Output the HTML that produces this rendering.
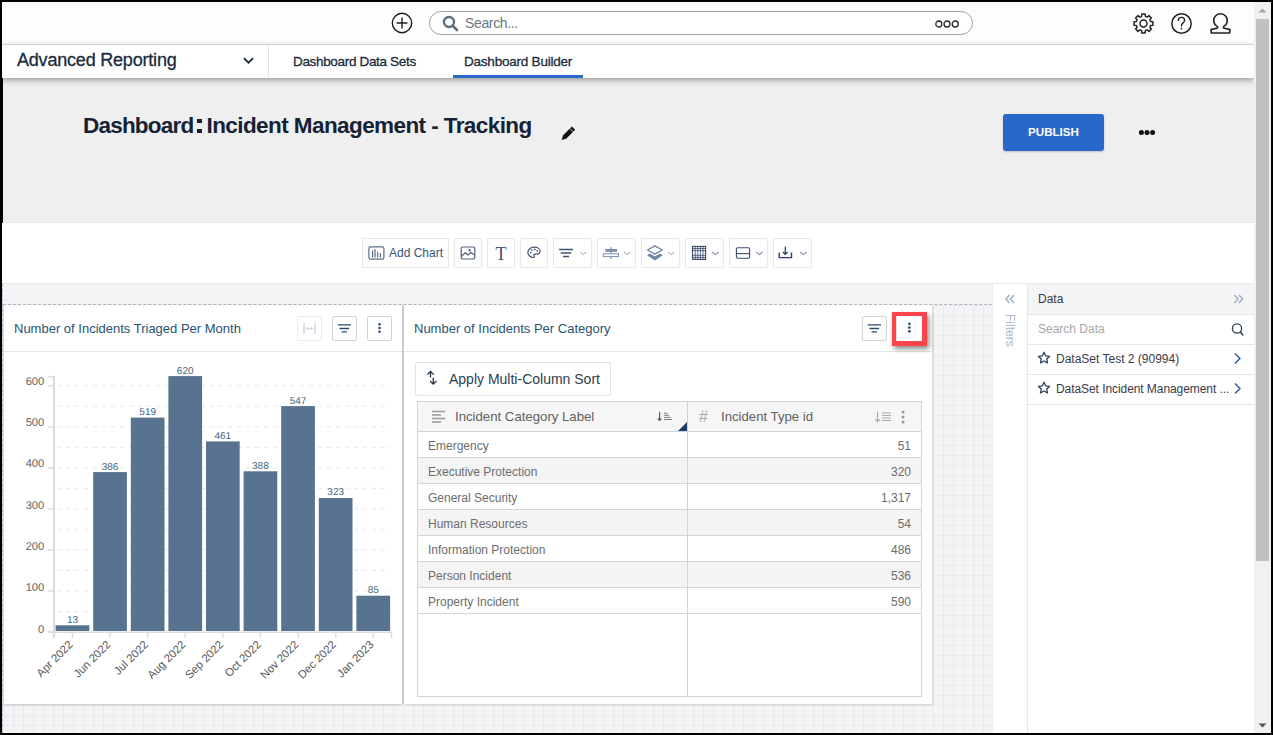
<!DOCTYPE html>
<html><head><meta charset="utf-8">
<style>
*{box-sizing:border-box;margin:0;padding:0}
html,body{width:1273px;height:735px;overflow:hidden;background:#000;font-family:"Liberation Sans",sans-serif}
.abs{position:absolute}
#app{position:absolute;left:2px;top:2px;width:1269px;height:730px;background:#fff;overflow:hidden}
.tb{top:238px;height:30px;border:1px solid #e8e8e8;border-radius:1px;background:#fff}
.cb{top:316px;width:25px;height:25px;border:1px solid #d4d4d4;border-radius:2px;background:#fff}
.t{position:absolute;white-space:nowrap;line-height:1}
</style></head>
<body>
<div class="abs" style="left:0;top:0;width:1273px;height:735px">

<!-- ===== top bar ===== -->
<div class="abs" style="left:2px;top:2px;width:1252px;height:42px;background:#fdfdfd"></div>
<div class="abs" style="left:2px;top:44px;width:1252px;height:1px;background:#dde2e6"></div>

<!-- plus circle -->
<svg class="abs" style="left:390px;top:11px" width="24" height="24" viewBox="0 0 24 24">
 <circle cx="12" cy="12" r="9.7" fill="none" stroke="#1e1e1e" stroke-width="1.4"/>
 <path d="M12 6.6V17.4M6.6 12H17.4" stroke="#1e1e1e" stroke-width="1.4"/>
</svg>
<!-- search box -->
<div class="abs" style="left:429px;top:11px;width:544px;height:24px;border:1px solid #9aa5ae;border-radius:12px;background:#fff"></div>
<svg class="abs" style="left:442px;top:14.5px" width="17" height="17" viewBox="0 0 17 17">
 <circle cx="7" cy="7" r="5" fill="none" stroke="#5c6f7c" stroke-width="2.4"/>
 <path d="M10.6 10.6L15 15" stroke="#5c6f7c" stroke-width="2.6" stroke-linecap="round"/>
</svg>
<div class="t" style="left:465px;top:15.9px;font-size:14px;letter-spacing:-0.35px;color:#6a7884">Search...</div>
<svg class="abs" style="left:934px;top:19px" width="26" height="10" viewBox="0 0 26 10">
 <circle cx="4.8" cy="5" r="3" fill="none" stroke="#222" stroke-width="1.3"/>
 <circle cx="13" cy="5" r="3" fill="none" stroke="#222" stroke-width="1.3"/>
 <circle cx="21.2" cy="5" r="3" fill="none" stroke="#222" stroke-width="1.3"/>
</svg>
<!-- gear -->
<svg class="abs" style="left:1131.1px;top:10.9px" width="25" height="25" viewBox="0 0 25 25">
 <path fill="none" stroke="#222" stroke-width="1.5" stroke-linejoin="round" d="M10.58 5.35 L10.83 3.05 L14.17 3.05 L14.42 5.35 L16.20 6.09 L18.01 4.64 L20.36 6.99 L18.91 8.80 L19.65 10.58 L21.95 10.83 L21.95 14.17 L19.65 14.42 L18.91 16.20 L20.36 18.01 L18.01 20.36 L16.20 18.91 L14.42 19.65 L14.17 21.95 L10.83 21.95 L10.58 19.65 L8.80 18.91 L6.99 20.36 L4.64 18.01 L6.09 16.20 L5.35 14.42 L3.05 14.17 L3.05 10.83 L5.35 10.58 L6.09 8.80 L4.64 6.99 L6.99 4.64 L8.80 6.09Z"/>
 <circle cx="12.5" cy="12.5" r="3.5" fill="none" stroke="#222" stroke-width="1.5"/>
</svg>
<!-- help -->
<svg class="abs" style="left:1169px;top:10.9px" width="25" height="25" viewBox="0 0 25 25">
 <circle cx="12.5" cy="12.5" r="9.7" fill="none" stroke="#222" stroke-width="1.5"/>
 <path d="M9.3 9.4c0-1.8 1.4-3 3.2-3s3.1 1.2 3.1 2.8c0 1.5-.9 2.2-1.8 2.9-.8.6-1.3 1.2-1.4 2.9" fill="none" stroke="#222" stroke-width="1.4" stroke-linecap="round"/>
 <circle cx="12.4" cy="17.6" r="0.95" fill="#222"/>
</svg>
<!-- user -->
<svg class="abs" style="left:1205px;top:8px" width="30" height="30" viewBox="0 0 30 30">
 <path fill="none" stroke="#222" stroke-width="1.6" stroke-linejoin="round" d="M12.5 18.6A6.8 6.8 0 1 1 18.5 18.6V20L25 21.6L24.7 25H6.3L6 21.6L12.5 20Z"/>
</svg>

<!-- ===== nav bar ===== -->
<div class="abs" style="left:3px;top:78px;width:1251px;height:145px;background:#efefef;border-bottom:1px solid #eaeaea"></div>

<div class="abs" style="left:2px;top:45px;width:1252px;height:33px;background:#fff;box-shadow:0 2px 6px rgba(0,0,0,.38)"></div>
<div class="t" style="left:17px;top:50.6px;font-size:18px;letter-spacing:-0.2px;color:#1b2b3b;-webkit-text-stroke:0.3px #1b2b3b">Advanced Reporting</div>
<svg class="abs" style="left:242px;top:56px" width="13" height="9" viewBox="0 0 13 9">
 <path d="M2 2.2L6.5 6.7 11 2.2" fill="none" stroke="#1b2b3b" stroke-width="1.8"/>
</svg>
<div class="abs" style="left:268px;top:45px;width:1px;height:32px;background:#dfe3e7"></div>
<div class="t" style="left:293px;top:54.5px;font-size:13.5px;letter-spacing:-0.33px;color:#1b2b3b;-webkit-text-stroke:0.3px #1b2b3b">Dashboard Data Sets</div>
<div class="t" style="left:464px;top:54.5px;font-size:13.5px;letter-spacing:-0.22px;color:#1b2b3b;-webkit-text-stroke:0.3px #1b2b3b">Dashboard Builder</div>
<div class="abs" style="left:453px;top:75px;width:130px;height:3px;background:#2a6ac9"></div>

<!-- ===== gray header area ===== -->
<div class="t" style="left:83px;top:115px;font-size:22.5px;font-weight:bold;letter-spacing:-0.8px;color:#152236">Dashboard</div>
<div class="abs" style="left:197px;top:119px;width:5px;height:4px;background:#152236"></div>
<div class="abs" style="left:197px;top:129px;width:5px;height:4px;background:#152236"></div>
<div class="t" style="left:206.5px;top:115px;font-size:22.5px;font-weight:bold;letter-spacing:-0.58px;color:#152236">Incident Management - Tracking</div>
<svg class="abs" style="left:552px;top:120px" width="30" height="26" viewBox="552 120 30 26">
 <path d="M561.6 140.1L562.97 135.47 571.87 126.57 575.13 129.83 566.23 138.73Z" fill="#111"/>
 <path d="M569.9 128.5l3.3 3.3" stroke="#efefef" stroke-width=".9"/>
</svg>
<div class="abs" style="left:1003px;top:114px;width:101px;height:37px;background:#2968c8;border-radius:3px;box-shadow:0 1px 2px rgba(0,0,0,.2)"></div>
<div class="t" style="left:1003px;top:126.3px;width:101px;text-align:center;font-size:11.6px;font-weight:bold;color:#fff">PUBLISH</div>
<svg class="abs" style="left:1138px;top:128px" width="18" height="8" viewBox="0 0 18 8">
 <circle cx="3.4" cy="4.4" r="2.5" fill="#111"/><circle cx="9" cy="4.4" r="2.5" fill="#111"/><circle cx="14.6" cy="4.4" r="2.5" fill="#111"/>
</svg>

<!-- ===== toolbar ===== -->
<div class="abs" style="left:2px;top:223px;width:1252px;height:60px;background:#fff"></div>

<!-- toolbar buttons -->
<div class="abs tb" style="left:362px;width:87px"></div>
<div class="abs tb" style="left:454px;width:28px"></div>
<div class="abs tb" style="left:487px;width:28px"></div>
<div class="abs tb" style="left:520px;width:28px"></div>
<div class="abs tb" style="left:553px;width:39px"></div>
<div class="abs tb" style="left:597px;width:39px"></div>
<div class="abs tb" style="left:641px;width:39px"></div>
<div class="abs tb" style="left:685px;width:39px"></div>
<div class="abs tb" style="left:729px;width:39px"></div>
<div class="abs tb" style="left:773px;width:39px"></div>
<div class="t" style="left:389px;top:246.8px;font-size:12px;color:#38557a">Add Chart</div>
<div class="t" style="left:491px;top:244.5px;width:20px;text-align:center;font-family:'Liberation Serif',serif;font-size:18px;color:#3f5470">T</div>
<svg class="abs" style="left:355px;top:236px" width="460" height="34" viewBox="355 236 460 34">
 <g fill="none" stroke-width="1.2">
  <rect x="368.9" y="246.8" width="15" height="12.4" rx="1.6" stroke="#5e6e84"/>
  <path d="M372.6 257.5v-7M375 257.5v-8.6M377.7 257.5v-5.6M380.4 257.5v-4.3" stroke="#4b5f7a" stroke-width="1.1"/>
  <rect x="461.2" y="247" width="13.6" height="12" rx="1.4" stroke="#4e6178"/>
  <path d="M461.6 256.2l3.6-3.4 2.8 2.2 3-2.7 3.4 2.8" stroke="#4e6178"/>
 </g>
 <circle cx="469.6" cy="250.2" r="1.1" fill="#3f5470"/>
 <path d="M534 247.2c-3.4 0-6.1 2.3-6.1 5.2 0 2.9 2.5 5.1 5.5 5.1.7 0 1-.4 1-.9 0-.6-.6-.9-.6-1.5 0-.6.5-.9 1.1-.9h1.4c2.2 0 3.8-1.3 3.8-3.1 0-2.3-2.7-3.9-6.1-3.9z" fill="none" stroke="#3f5470" stroke-width="1.2"/>
 <circle cx="530.8" cy="252.6" r=".85" fill="#3f5470"/><circle cx="531.9" cy="250" r=".85" fill="#3f5470"/><circle cx="534.8" cy="249.4" r=".85" fill="#3f5470"/><circle cx="537.2" cy="250.8" r=".85" fill="#3f5470"/>
 <path d="M559 249.6h14M560.7 253.1h10.6M563 256.6h6" stroke="#3f5470" stroke-width="1.5"/>
 <!-- align -->
 <path d="M610.9 247.2v11.6" stroke="#7d90ab" stroke-width="1.3"/>
 <rect x="605.4" y="249" width="11.6" height="2.9" fill="#7d90ab"/>
 <rect x="603.3" y="253.8" width="15.2" height="2.8" fill="#fff" stroke="#7d90ab" stroke-width="1"/>
 <!-- layers -->
 <path d="M654.9 245.8l7.3 4.2-7.3 4.2-7.3-4.2z" fill="none" stroke="#6f86a6" stroke-width="1.4" stroke-linejoin="round"/>
 <path d="M647 255.3l7.9 5.2 7.9-5.2-2.9-1.9-5 3.2-5-3.2z" fill="#6f86a6"/>
 <!-- grid -->
 <rect x="692.5" y="246.4" width="13.1" height="13" fill="none" stroke="#36476a" stroke-width="1.1"/>
 <path d="M695.2 246.5v13M697.8 246.5v13M700.4 246.5v13M703 246.5v13M692.5 248.5h13M692.5 250.6h13M692.5 255.3h13M692.5 257.4h13" stroke="#36476a" stroke-width=".8"/>
 <!-- border -->
 <rect x="736.4" y="247.7" width="13.2" height="10.6" rx="1.2" fill="none" stroke="#3a4d6e" stroke-width="1.1"/>
 <path d="M736.6 253.6h13" stroke="#3a4d6e" stroke-width="1.1"/>
 <!-- download -->
 <path d="M779.2 252.4v5.2h12.3v-5.2" fill="none" stroke="#2f416a" stroke-width="1.4"/>
 <path d="M785.3 246.7v7.6M782.9 252l2.4 2.4 2.4-2.4" fill="none" stroke="#2f416a" stroke-width="1.3"/>
 <!-- chevrons -->
 <path d="M580.2 252l2.9 2.7 2.9-2.7M624 252l3.2 2.6 3.2-2.6M668 252l3.2 2.6 3.2-2.6" fill="none" stroke="#8ba3c6" stroke-width="1"/>
 <path d="M712.2 252l3.2 2.6 3.2-2.6M756.2 252l3.2 2.6 3.2-2.6M800.2 252l3.2 2.6 3.2-2.6" fill="none" stroke="#5a5a9a" stroke-width="1"/>
</svg>

<!-- ===== canvas ===== -->
<div class="abs" style="left:2px;top:283px;width:991px;height:450px;background:#f4f4f6"></div>
<div class="abs" style="left:2px;top:283px;width:1252px;height:1px;background:#ececec"></div>
<svg class="abs" style="left:0;top:280px" width="995" height="30" viewBox="0 280 995 30"><path d="M3.1 304.5H992.5" stroke="#aab6c3" stroke-width="1" stroke-dasharray="3 2.006"/></svg>
<svg class="abs" style="left:0;top:283px" width="4" height="450" viewBox="0 283 4 450"><path d="M2.5 283V733" stroke="#b4c0cc" stroke-width="1" stroke-dasharray="3.7 1.3" stroke-dashoffset="-0.3"/></svg>
<div class="abs" style="left:3px;top:305px;width:990px;height:428px;background-image:linear-gradient(90deg,#eaeaec 1px,transparent 1px),linear-gradient(180deg,#eaeaec 1px,transparent 1px);background-size:10px 10px"></div>
<!-- ===== card 1 ===== -->
<div class="abs" style="left:402px;top:305px;width:2px;height:399px;background:#d4d4d4"></div>
<div class="abs" style="left:4px;top:305px;width:398px;height:399px;background:#fff;box-shadow:0 1px 2px rgba(0,0,0,.2)"></div>
<div class="abs" style="left:4px;top:351px;width:398px;height:1px;background:#e6e6e6"></div>
<div class="t" style="left:14px;top:322px;font-size:13px;color:#27546e">Number of Incidents Triaged Per Month</div>
<div class="abs cb" style="left:297px;border-color:#ececec"></div>
<svg class="abs" style="left:297px;top:316px" width="25" height="25" viewBox="0 0 25 25">
 <path d="M7 7.6v10M18 7.6v10" stroke="#c5d0dc" stroke-width="1.3"/>
 <path d="M9.3 12.5h6.4M10.8 11l-1.5 1.5 1.5 1.5M14.2 11l1.5 1.5-1.5 1.5" fill="none" stroke="#c5d0dc" stroke-width="0.9"/>
</svg>
<div class="abs cb" style="left:332px"></div>
<svg class="abs" style="left:332px;top:316px" width="25" height="25" viewBox="0 0 25 25">
 <path d="M5.8 8.9h13.2M7.5 12.5h9.6M9.6 15.8h5.4" stroke="#2b4a6c" stroke-width="1.3"/>
</svg>
<div class="abs cb" style="left:367px"></div>
<svg class="abs" style="left:367px;top:316px" width="25" height="25" viewBox="0 0 25 25">
 <circle cx="12.5" cy="8.2" r="1.3" fill="#2b4a6c"/><circle cx="12.5" cy="12" r="1.3" fill="#2b4a6c"/><circle cx="12.5" cy="15.8" r="1.3" fill="#2b4a6c"/>
</svg>

<!-- ===== card 2 ===== -->
<div class="abs" style="left:404px;top:305px;width:528px;height:399px;background:#fff;box-shadow:1px 1px 2px rgba(0,0,0,.15)"></div>
<div class="abs" style="left:404px;top:351px;width:528px;height:1px;background:#e6e6e6"></div>
<div class="t" style="left:414px;top:322px;font-size:13px;color:#27546e">Number of Incidents Per Category</div>
<div class="abs cb" style="left:862px"></div>
<svg class="abs" style="left:862px;top:316px" width="25" height="25" viewBox="0 0 25 25">
 <path d="M5.8 8.9h13.2M7.5 12.5h9.6M9.6 15.8h5.4" stroke="#2b4a6c" stroke-width="1.3"/>
</svg>
<div class="abs" style="left:892px;top:312px;width:35px;height:34px;border:solid #f8444a;border-width:4px 5px 5px 4px;background:#fff;box-shadow:2px 3px 5px rgba(0,0,0,.45)"></div><div class="abs" style="left:896px;top:316px;width:1px;height:25px;background:#e0e0e0"></div>
<svg class="abs" style="left:896px;top:316px" width="27" height="25" viewBox="0 0 27 25">
 <circle cx="13.4" cy="7.8" r="1.35" fill="#2b4a6c"/><circle cx="13.4" cy="11.6" r="1.35" fill="#2b4a6c"/><circle cx="13.4" cy="15.3" r="1.35" fill="#2b4a6c"/>
</svg>
<!-- multi sort button -->
<div class="abs" style="left:415px;top:362px;width:196px;height:34px;border:1px solid #e2e2e2;border-radius:2px;background:#fff"></div>
<svg class="abs" style="left:420px;top:364px" width="25" height="28" viewBox="420 364 25 28">
 <path d="M430.5 377.6V371.6M427.3 374.6l3.2-3.2 3.2 3.2M433.3 377.8V383.6M430.1 380.9l3.2 3.2 3.2-3.2" fill="none" stroke="#1f3044" stroke-width="1.3"/>
</svg>
<div class="t" style="left:449px;top:372px;font-size:14px;color:#2f3e4e">Apply Multi-Column Sort</div>
<!-- table -->
<div class="abs" style="left:417px;top:401px;width:505px;height:296px;border:1px solid #cdd5de;background:#fff"></div>
<div class="abs" style="left:418px;top:402px;width:503px;height:29px;background:#f6f6f6"></div>
<div class="abs" style="left:418px;top:431px;width:503px;height:1px;background:#cdd5de"></div>
<svg class="abs" style="left:431px;top:410px" width="15" height="15" viewBox="0 0 15 15">
 <path d="M1 1.5h13M1 5h9M1 8.5h13M1 12h9" stroke="#999" stroke-width="1.3"/>
</svg>
<div class="t" style="left:455px;top:410px;font-size:13.2px;color:#616161">Incident Category Label</div>
<svg class="abs" style="left:650px;top:405px" width="30" height="20" viewBox="650 405 30 20">
 <path d="M659.6 411.8v8.6M657.8 418.5l1.8 1.9 1.8-1.9" fill="none" stroke="#555" stroke-width="1.1"/>
 <path d="M664.1 413.3h3.5M664.1 415.3h5M664.1 417.4h6.4M664.1 419.5h8" stroke="#555" stroke-width=".8"/>
</svg>
<svg class="abs" style="left:678px;top:422px" width="9" height="9" viewBox="0 0 9 9"><path d="M9 0V9H0z" fill="#1f3f66"/></svg>
<div class="t" style="left:699px;top:409px;font-size:16px;color:#aaa">#</div>
<div class="t" style="left:721px;top:410px;font-size:13.2px;color:#616161">Incident Type id</div>
<svg class="abs" style="left:874px;top:410px" width="18" height="14" viewBox="0 0 18 14">
 <path d="M3.5 1.5v10M1.3 9.3l2.2 2.3 2.2-2.3" fill="none" stroke="#aaa" stroke-width="1.2"/>
 <path d="M8 3h9M8 5.5h9M8 8h9M8 10.5h9" stroke="#aaa" stroke-width="1"/>
</svg>
<svg class="abs" style="left:898px;top:409px" width="10" height="16" viewBox="0 0 10 16">
 <circle cx="5" cy="3" r="1.5" fill="#999"/><circle cx="5" cy="8" r="1.5" fill="#999"/><circle cx="5" cy="13" r="1.5" fill="#999"/>
</svg>
<div class="abs" style="left:418px;top:432px;width:503px;height:25px;background:#fff"></div>
<div class="abs" style="left:418px;top:457px;width:503px;height:1px;background:#cfd6de"></div>
<div class="t" style="left:428px;top:440px;font-size:12px;color:#6d6d6d">Emergency</div>
<div class="t" style="left:690px;width:221px;text-align:right;top:440px;font-size:12px;color:#6d6d6d">51</div>
<div class="abs" style="left:418px;top:458px;width:503px;height:25px;background:#f4f4f4"></div>
<div class="abs" style="left:418px;top:483px;width:503px;height:1px;background:#cfd6de"></div>
<div class="t" style="left:428px;top:466px;font-size:12px;color:#6d6d6d">Executive Protection</div>
<div class="t" style="left:690px;width:221px;text-align:right;top:466px;font-size:12px;color:#6d6d6d">320</div>
<div class="abs" style="left:418px;top:484px;width:503px;height:25px;background:#fff"></div>
<div class="abs" style="left:418px;top:509px;width:503px;height:1px;background:#cfd6de"></div>
<div class="t" style="left:428px;top:492px;font-size:12px;color:#6d6d6d">General Security</div>
<div class="t" style="left:690px;width:221px;text-align:right;top:492px;font-size:12px;color:#6d6d6d">1,317</div>
<div class="abs" style="left:418px;top:510px;width:503px;height:25px;background:#f4f4f4"></div>
<div class="abs" style="left:418px;top:535px;width:503px;height:1px;background:#cfd6de"></div>
<div class="t" style="left:428px;top:518px;font-size:12px;color:#6d6d6d">Human Resources</div>
<div class="t" style="left:690px;width:221px;text-align:right;top:518px;font-size:12px;color:#6d6d6d">54</div>
<div class="abs" style="left:418px;top:536px;width:503px;height:25px;background:#fff"></div>
<div class="abs" style="left:418px;top:561px;width:503px;height:1px;background:#cfd6de"></div>
<div class="t" style="left:428px;top:544px;font-size:12px;color:#6d6d6d">Information Protection</div>
<div class="t" style="left:690px;width:221px;text-align:right;top:544px;font-size:12px;color:#6d6d6d">486</div>
<div class="abs" style="left:418px;top:562px;width:503px;height:25px;background:#f4f4f4"></div>
<div class="abs" style="left:418px;top:587px;width:503px;height:1px;background:#cfd6de"></div>
<div class="t" style="left:428px;top:570px;font-size:12px;color:#6d6d6d">Person Incident</div>
<div class="t" style="left:690px;width:221px;text-align:right;top:570px;font-size:12px;color:#6d6d6d">536</div>
<div class="abs" style="left:418px;top:588px;width:503px;height:25px;background:#fff"></div>
<div class="abs" style="left:418px;top:613px;width:503px;height:1px;background:#cfd6de"></div>
<div class="t" style="left:428px;top:596px;font-size:12px;color:#6d6d6d">Property Incident</div>
<div class="t" style="left:690px;width:221px;text-align:right;top:596px;font-size:12px;color:#6d6d6d">590</div>
<div class="abs" style="left:687px;top:402px;width:1px;height:294px;background:#cdd5de"></div>
<svg class="abs" style="left:0;top:0;font-family:'Liberation Sans',sans-serif;text-rendering:geometricPrecision" width="410" height="735">
<path d="M57 611.5H391" stroke="#e8e8e8" stroke-width="1" stroke-dasharray="4 5"/>
<path d="M57 591.0H391" stroke="#e8e8e8" stroke-width="1" stroke-dasharray="4 5"/>
<path d="M57 570.4H391" stroke="#e8e8e8" stroke-width="1" stroke-dasharray="4 5"/>
<path d="M57 549.9H391" stroke="#e8e8e8" stroke-width="1" stroke-dasharray="4 5"/>
<path d="M57 529.4H391" stroke="#e8e8e8" stroke-width="1" stroke-dasharray="4 5"/>
<path d="M57 508.9H391" stroke="#e8e8e8" stroke-width="1" stroke-dasharray="4 5"/>
<path d="M57 488.3H391" stroke="#e8e8e8" stroke-width="1" stroke-dasharray="4 5"/>
<path d="M57 467.8H391" stroke="#e8e8e8" stroke-width="1" stroke-dasharray="4 5"/>
<path d="M57 447.3H391" stroke="#e8e8e8" stroke-width="1" stroke-dasharray="4 5"/>
<path d="M57 426.8H391" stroke="#e8e8e8" stroke-width="1" stroke-dasharray="4 5"/>
<path d="M57 406.2H391" stroke="#e8e8e8" stroke-width="1" stroke-dasharray="4 5"/>
<path d="M57 385.7H391" stroke="#e8e8e8" stroke-width="1" stroke-dasharray="4 5"/>
<path d="M48 632.0H54" stroke="#dcdcdc" stroke-width="1.5"/>
<text x="44.3" y="632.8" text-anchor="end" font-size="11.2" fill="#666">0</text>
<path d="M48 591.0H54" stroke="#dcdcdc" stroke-width="1.5"/>
<text x="44.3" y="590.6" text-anchor="end" font-size="11.2" fill="#666">100</text>
<path d="M48 549.9H54" stroke="#dcdcdc" stroke-width="1.5"/>
<text x="44.3" y="549.5" text-anchor="end" font-size="11.2" fill="#666">200</text>
<path d="M48 508.9H54" stroke="#dcdcdc" stroke-width="1.5"/>
<text x="44.3" y="508.5" text-anchor="end" font-size="11.2" fill="#666">300</text>
<path d="M48 467.8H54" stroke="#dcdcdc" stroke-width="1.5"/>
<text x="44.3" y="467.4" text-anchor="end" font-size="11.2" fill="#666">400</text>
<path d="M48 426.8H54" stroke="#dcdcdc" stroke-width="1.5"/>
<text x="44.3" y="426.4" text-anchor="end" font-size="11.2" fill="#666">500</text>
<path d="M48 385.7H54" stroke="#dcdcdc" stroke-width="1.5"/>
<text x="44.3" y="385.3" text-anchor="end" font-size="11.2" fill="#666">600</text>
<rect x="55.6" y="625.3" width="33.7" height="5.7" fill="#587390"/>
<text x="72.5" y="622.7" text-anchor="middle" font-size="10" fill="#41687e">13</text>
<path d="M72.5 632V638" stroke="#dcdcdc" stroke-width="1.5"/>
<text transform="translate(73.5 645.3) rotate(-45)" text-anchor="end" font-size="11.3" fill="#555">Apr 2022</text>
<rect x="93.2" y="472.1" width="33.7" height="158.9" fill="#587390"/>
<text x="110.1" y="469.5" text-anchor="middle" font-size="10" fill="#41687e">386</text>
<path d="M110.1 632V638" stroke="#dcdcdc" stroke-width="1.5"/>
<text transform="translate(111.2 645.3) rotate(-45)" text-anchor="end" font-size="11.3" fill="#555">Jun 2022</text>
<rect x="130.8" y="417.6" width="33.7" height="213.4" fill="#587390"/>
<text x="147.7" y="415.0" text-anchor="middle" font-size="10" fill="#41687e">519</text>
<path d="M147.7 632V638" stroke="#dcdcdc" stroke-width="1.5"/>
<text transform="translate(148.8 645.3) rotate(-45)" text-anchor="end" font-size="11.3" fill="#555">Jul 2022</text>
<rect x="168.4" y="376.1" width="33.7" height="254.9" fill="#587390"/>
<text x="185.2" y="373.5" text-anchor="middle" font-size="10" fill="#41687e">620</text>
<path d="M185.2 632V638" stroke="#dcdcdc" stroke-width="1.5"/>
<text transform="translate(186.3 645.3) rotate(-45)" text-anchor="end" font-size="11.3" fill="#555">Aug 2022</text>
<rect x="206.0" y="441.4" width="33.7" height="189.6" fill="#587390"/>
<text x="222.8" y="438.8" text-anchor="middle" font-size="10" fill="#41687e">461</text>
<path d="M222.8 632V638" stroke="#dcdcdc" stroke-width="1.5"/>
<text transform="translate(223.9 645.3) rotate(-45)" text-anchor="end" font-size="11.3" fill="#555">Sep 2022</text>
<rect x="243.6" y="471.3" width="33.7" height="159.7" fill="#587390"/>
<text x="260.4" y="468.7" text-anchor="middle" font-size="10" fill="#41687e">388</text>
<path d="M260.4 632V638" stroke="#dcdcdc" stroke-width="1.5"/>
<text transform="translate(261.6 645.3) rotate(-45)" text-anchor="end" font-size="11.3" fill="#555">Oct 2022</text>
<rect x="281.2" y="406.1" width="33.7" height="224.9" fill="#587390"/>
<text x="298.1" y="403.5" text-anchor="middle" font-size="10" fill="#41687e">547</text>
<path d="M298.1 632V638" stroke="#dcdcdc" stroke-width="1.5"/>
<text transform="translate(299.2 645.3) rotate(-45)" text-anchor="end" font-size="11.3" fill="#555">Nov 2022</text>
<rect x="318.8" y="498.0" width="33.7" height="133.0" fill="#587390"/>
<text x="335.7" y="495.4" text-anchor="middle" font-size="10" fill="#41687e">323</text>
<path d="M335.7 632V638" stroke="#dcdcdc" stroke-width="1.5"/>
<text transform="translate(336.8 645.3) rotate(-45)" text-anchor="end" font-size="11.3" fill="#555">Dec 2022</text>
<rect x="356.4" y="595.7" width="33.7" height="35.3" fill="#587390"/>
<text x="373.3" y="593.1" text-anchor="middle" font-size="10" fill="#41687e">85</text>
<path d="M373.3 632V638" stroke="#dcdcdc" stroke-width="1.5"/>
<text transform="translate(374.4 645.3) rotate(-45)" text-anchor="end" font-size="11.3" fill="#555">Jan 2023</text>
<path d="M54 376V638" stroke="#dcdcdc" stroke-width="2.2"/>
<path d="M48 632.3H391.5" stroke="#dcdcdc" stroke-width="1.6"/>
<path d="M391.5 632V638" stroke="#dcdcdc" stroke-width="1.5"/>
<path d="M48 376.6H54" stroke="#dcdcdc" stroke-width="1.5"/>
</svg>

<!-- ===== filters panel ===== -->
<div class="abs" style="left:992px;top:284px;width:36px;height:449px;background:#fff;border-left:1px solid #ececec;border-right:1px solid #e8e8e8"></div>
<svg class="abs" style="left:1004px;top:294px" width="12" height="10" viewBox="0 0 12 10">
 <path d="M5.5 1L2 5l3.5 4M10 1L6.5 5 10 9" fill="none" stroke="#a3b3c7" stroke-width="1.6"/>
</svg>
<div class="t" style="left:1004px;top:314px;font-size:12px;color:#a8b7ca;transform-origin:0 0;transform:translate(12px,0) rotate(90deg)">Filters</div>
<!-- ===== data panel ===== -->
<div class="abs" style="left:1028px;top:284px;width:226px;height:449px;background:#fff"></div>
<div class="abs" style="left:1028px;top:284px;width:226px;height:31px;background:#f4f5f7;border-bottom:1px solid #e6e6e6"></div>
<div class="t" style="left:1038px;top:293px;font-size:12px;color:#3a3a4a">Data</div>
<svg class="abs" style="left:1233px;top:294px" width="12" height="10" viewBox="0 0 12 10">
 <path d="M1.5 1L5 5 1.5 9M6 1l3.5 4L6 9" fill="none" stroke="#a3b3c7" stroke-width="1.6"/>
</svg>
<div class="t" style="left:1038px;top:323px;font-size:12px;color:#a6a6a6">Search Data</div>
<svg class="abs" style="left:1231px;top:322px" width="14" height="15" viewBox="0 0 14 15">
 <circle cx="6" cy="6.5" r="4.6" fill="none" stroke="#2c3e55" stroke-width="1.3"/>
 <path d="M9.3 10l3 3.5" stroke="#2c3e55" stroke-width="1.5"/>
</svg>
<div class="abs" style="left:1028px;top:344px;width:226px;height:1px;background:#e6e6e6"></div>
<svg class="abs" style="left:1037px;top:351px" width="14" height="14" viewBox="0 0 14 14">
 <path d="M7 1.2l1.7 3.7 4 .4-3 2.7.9 4-3.6-2.1-3.6 2.1.9-4-3-2.7 4-.4z" fill="none" stroke="#283c5a" stroke-width="1.2" stroke-linejoin="round"/>
</svg>
<div class="t" style="left:1056px;top:353px;font-size:12px;color:#3a3a4a">DataSet Test 2 (90994)</div>
<svg class="abs" style="left:1233px;top:352px" width="9" height="13" viewBox="0 0 9 13"><path d="M2 1.5l5 5-5 5" fill="none" stroke="#2a57a8" stroke-width="1.4"/></svg>
<div class="abs" style="left:1028px;top:374px;width:226px;height:1px;background:#e6e6e6"></div>
<svg class="abs" style="left:1037px;top:381px" width="14" height="14" viewBox="0 0 14 14">
 <path d="M7 1.2l1.7 3.7 4 .4-3 2.7.9 4-3.6-2.1-3.6 2.1.9-4-3-2.7 4-.4z" fill="none" stroke="#283c5a" stroke-width="1.2" stroke-linejoin="round"/>
</svg>
<div class="t" style="left:1056px;top:383px;font-size:12px;letter-spacing:-0.07px;color:#3a3a4a">DataSet Incident Management ...</div>
<svg class="abs" style="left:1233px;top:382px" width="9" height="13" viewBox="0 0 9 13"><path d="M2 1.5l5 5-5 5" fill="none" stroke="#2a57a8" stroke-width="1.4"/></svg>
<div class="abs" style="left:1028px;top:404px;width:226px;height:1px;background:#e6e6e6"></div>
<!-- ===== scrollbar ===== -->
<div class="abs" style="left:1254px;top:2px;width:17px;height:731px;background:#f1f1f1"></div>
<div class="abs" style="left:1256px;top:19px;width:13px;height:542px;background:#c1c1c1"></div>
<svg class="abs" style="left:1254px;top:2px" width="17" height="17" viewBox="0 0 17 17"><path d="M4.5 10.5h8L8.5 6.5z" fill="#a3a3a3"/></svg>
<svg class="abs" style="left:1254px;top:716.5px" width="17" height="17" viewBox="0 0 17 17"><path d="M4.5 6.5h8L8.5 10.5z" fill="#505050"/></svg>
</div>
</body></html>
